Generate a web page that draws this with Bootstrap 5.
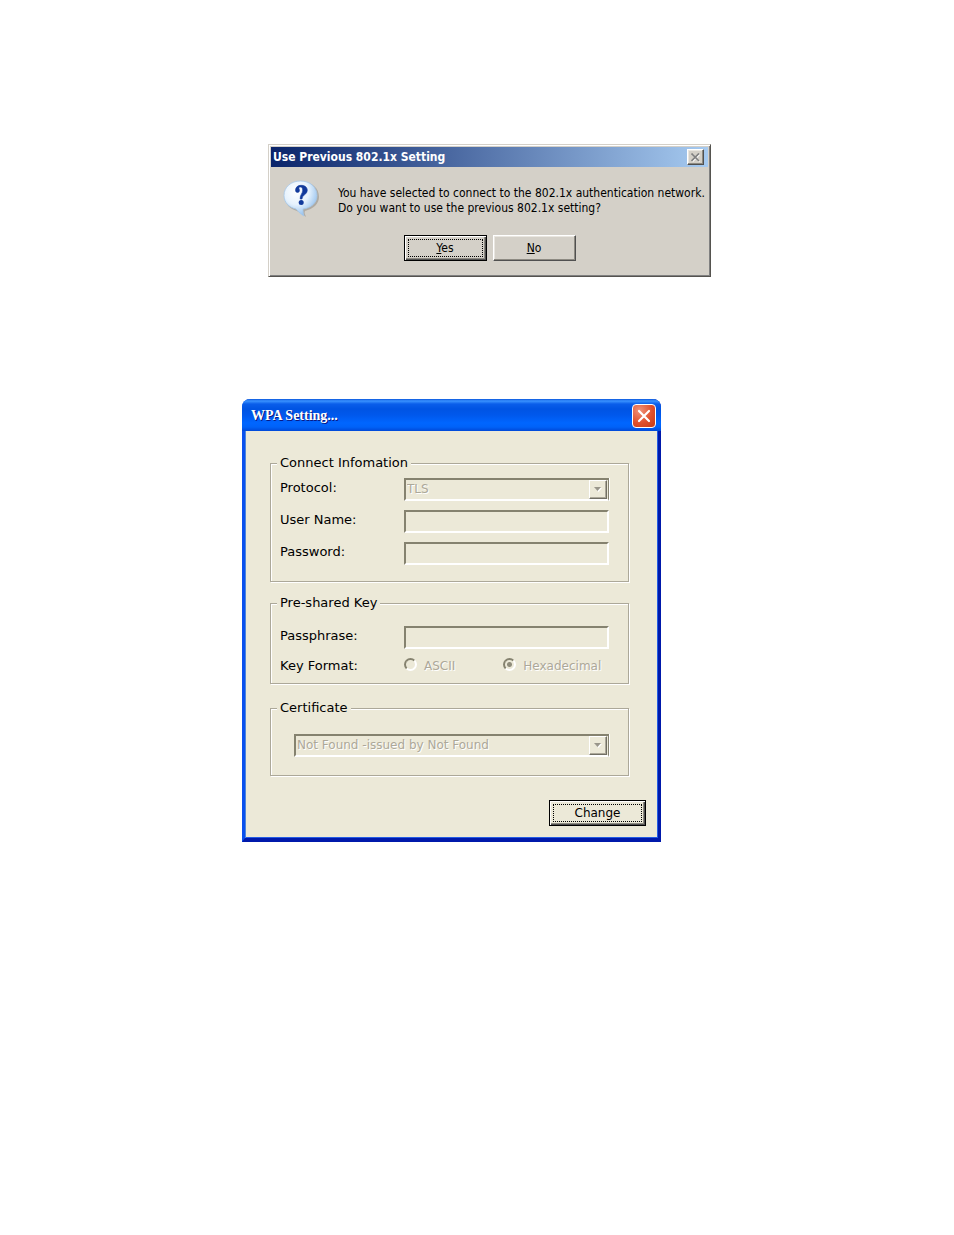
<!DOCTYPE html>
<html lang="en">
<head>
<meta charset="utf-8">
<meta name="viewport" content="width=device-width, initial-scale=1">
<title>Wireless settings dialogs</title>
<link href="https://cdn.jsdelivr.net/npm/bootstrap@5.3.0/dist/css/bootstrap.min.css" rel="stylesheet">
<style>
  body { background: #fff; color: #000; }
  .page { padding-top: 144px; gap: 122px; }
  .slot-prompt { padding-left: 25px; }
  .slot-wpa { padding-right: 51px; }

  /* Classic grey message box */
  .prompt {
    width: 100%; max-width: 443px; padding: 2px 2px 15px;
    background: #d4d0c8; font: 12px/15px "DejaVu Sans Condensed", "DejaVu Sans", sans-serif;
    border: 1px solid; border-color: #d4d0c8 #55534f #55534f #d4d0c8;
    box-shadow: inset 1px 1px #fff, inset -1px -1px #808080;
  }
  .prompt-title {
    height: 20px; padding: 0 4px 0 2px; color: #fff;
    background: linear-gradient(90deg, #0a246a, #a6caf0);
  }
  .prompt-title h1 { font: bold 12px/20px "DejaVu Sans Condensed", "DejaVu Sans", sans-serif; margin: 0; }
  .prompt-close { width: 17px; height: 16px; color: #808080; }
  .prompt-body { padding: 13px 3px 0 12px; gap: 19px; }
  .prompt-text { padding-top: 6px; }
  .prompt-actions { gap: 6px; margin-top: 17px; }
  .prompt-actions .btn { width: 83px; height: 26px; }

  .btn.classic {
    --bs-btn-font-size: inherit; --bs-btn-line-height: 16px; --bs-btn-color: #000;
    --bs-btn-hover-color: #000; --bs-btn-border-radius: 0; font-family: inherit;
    padding: 0; border: 1px solid; border-color: #fff #505050 #505050 #fff; border-radius: 0;
    background: #d4d0c8; box-shadow: inset -1px -1px #8d8a82, inset 1px 1px #e9e6e0;
  }
  .btn.classic.default-btn { border-color: #000; box-shadow: inset 1px 1px #fff, inset -1px -1px #505050, inset -2px -2px #8d8a82; padding: 3px; }
  .focus-dots { border: 1px dotted #000; }

  /* Blue themed settings window */
  .wpa {
    width: 100%; max-width: 419px; background: #ece9d8; border: solid #0831d9;
    border-width: 0 3px 4px; border-color: #0a50ee #0019ab #0019ab #0a50ee;
    border-radius: 8px 8px 0 0; box-shadow: inset 1px 0 #4d86dc, inset -1px 0 #245ce4, inset 0 -1px #245ce4;
    font: 13px/16px "DejaVu Sans", sans-serif;
  }
  .wpa-title {
    height: 32px; margin: 0 -3px; padding: 2px 5px 0 9px; color: #fff; border-radius: 8px 8px 0 0;
    background: linear-gradient(#0a56dc 0, #3a93ff 2px, #0a5eea 5px, #0054e3 10px, #0058ec 16px, #0066ff 24px, #0062f8 28px, #0048d8 32px);
  }
  .wpa-title h2 { margin: 0; font: bold 14px/20px "Liberation Serif", serif; text-shadow: 1px 1px #0a1883; }
  .wpa-close {
    width: 24px; height: 24px; border: 1px solid #fff; border-radius: 4px; color: #fff;
    background: radial-gradient(circle at 30% 25%, #f0937a, #e0502c 55%, #c43a14);
  }
  .wpa-form { padding: 24px 12px 12px 25px; }
  .group {
    margin: 0 17px 0 0; padding: 0 19px 16px 9px; border: 1px solid #aca899;
    box-shadow: 1px 1px #fff, inset 1px 1px #fff;
  }
  .group legend {
    float: none; width: auto; margin: 0 0 7px -3px; padding: 0 3px;
    font: inherit; background: #ece9d8;
  }
  .group-key { margin-top: 13px; padding-bottom: 9px; }
  .group-cert { margin-top: 16px; padding-bottom: 18px; }
  .cert-pick { margin: 11px 0 0 14px; }
  .field-name { width: 124px; flex: none; padding-bottom: 3px; }
  .sunken {
    width: 100%; height: 23px; padding: 0 2px; border: 2px solid; border-radius: 0;
    border-color: #85826f #fff #fff #85826f; background: #ece9d8; appearance: none;
    font: inherit; font-size: 12px; color: #aca899; opacity: 1; text-shadow: 1px 1px #fff; display: block;
  }
  select.sunken { padding: 0 1px 2px; border-width: 2px 1px 2px 2px; border-right-color: #85826f; box-shadow: 1px 0 #fff; }
  .drop {
    right: 2px; top: 2px; bottom: 2px; width: 18px; pointer-events: none;
    border: 1px solid; border-color: #fff #716f64 #716f64 #fff; box-shadow: inset -1px -1px #aca899;
  }
  .fields { gap: 9px; }
  .radio-mark {
    appearance: none; width: 13px; height: 13px; margin: 0; border-radius: 50%;
    border: 2px solid; border-color: #85826f #fff #fff #85826f;
  }
  .radio-mark:checked { background: radial-gradient(circle, #8f8c7b 0 2px, transparent 3px); }
  .off { font-size: 12px; color: #aca899; text-shadow: 1px 1px #fff; }
  .radios { gap: 48px; }
  .radio-item { gap: 7px; }
  .wpa .btn.classic { background: #ece9d8; width: 97px; height: 26px; font-size: 12px; }
</style>
</head>
<body>
<main class="page d-flex flex-column">
  <div class="slot-prompt d-flex justify-content-center">
    <section class="prompt" role="dialog" aria-labelledby="prompt-title">
      <header class="prompt-title d-flex align-items-center justify-content-between">
        <h1 id="prompt-title">Use Previous 802.1x Setting</h1>
        <button type="button" class="btn classic prompt-close d-flex align-items-center justify-content-center" aria-label="Close">
          <svg width="9" height="9" viewBox="0 0 9 9" fill="none"><path d="M1.5 1.5l7 7M8.5 1.5l-7 7" stroke="#fff" stroke-width="1.5"/><path d="M.5.5l7.500 7.500M8 .5L.5 8" stroke="#808080" stroke-width="1.700"/></svg>
        </button>
      </header>
      <div class="prompt-body d-flex">
        <svg class="flex-shrink-0" width="36" height="38" viewBox="0 0 36 38" aria-hidden="true">
          <defs><radialGradient id="bubble" cx=".38" cy=".3" r=".75"><stop offset="0" stop-color="#fff"/><stop offset=".5" stop-color="#e6f2fd"/><stop offset="1" stop-color="#88b9eb"/></radialGradient></defs>
          <path d="M19 2C9 2 2 8 2 17c0 7 5 12 12 14 3 1 5 3 9 6-1-3-2-4-1-6 8-2 14-7 14-14C36 8 29 2 19 2z" fill="#77736b" opacity=".4"/>
          <path d="M17.500 1C8 1 1 7 1 15.500c0 7 5 12 12 13.500 2 2 4 5 8 7-1-3-1-5-1-7 8-1 14-6 14-13.500C34 7 27 1 17.500 1z" fill="url(#bubble)" stroke="#a7c8e8" stroke-width=".8"/>
          <path d="M12.500 10.500c0-3.500 2.500-5.200 5.500-5.200 3.700 0 6.300 1.900 6.300 5 0 4.200-5 4.400-5.300 8.700h-1.800c-.4-4 2.500-5.500 2.500-8.800 0-2-.9-3.200-2.300-3.200-1 0-1.500.5-1.500 1.200 0 .8.600 1.200.6 2.200a2 2 0 0 1-4 .1z" fill="#123a9c" stroke="#123a9c" stroke-width=".6"/>
          <circle cx="18.200" cy="22.500" r="2.500" fill="#123a9c"/>
        </svg>
        <p class="prompt-text text-nowrap mb-0">You have selected to connect to the 802.1x authentication network.<br>Do you want to use the previous 802.1x setting?</p>
      </div>
      <div class="prompt-actions d-flex justify-content-center">
        <button type="button" class="btn classic default-btn d-flex"><span class="focus-dots w-100 h-100"><u>Y</u>es</span></button>
        <button type="button" class="btn classic"><u>N</u>o</button>
      </div>
    </section>
  </div>

  <div class="slot-wpa d-flex justify-content-center">
    <section class="wpa" role="dialog" aria-labelledby="wpa-title">
      <header class="wpa-title d-flex align-items-center justify-content-between">
        <h2 id="wpa-title">WPA Setting...</h2>
        <button type="button" class="wpa-close p-0 d-flex align-items-center justify-content-center" aria-label="Close">
          <svg width="14" height="14" viewBox="0 0 14 14" stroke="#fff" stroke-width="2.200" stroke-linecap="round"><path d="M2 2l10 10M12 2L2 12"/></svg>
        </button>
      </header>
      <form class="wpa-form">
        <fieldset class="group">
          <legend>Connect Infomation</legend>
          <div class="fields d-flex flex-column">
            <div class="d-flex align-items-center">
              <label class="field-name" for="protocol">Protocol:</label>
              <div class="position-relative flex-grow-1">
                <select class="sunken" id="protocol" disabled><option>TLS</option></select>
                <span class="drop position-absolute d-flex align-items-center justify-content-center"><svg width="8" height="5"><path d="M1 1h7L4.500 5z" fill="#fff"/><path d="M0 0h7L3.500 4z" fill="#99968a"/></svg></span>
              </div>
            </div>
            <div class="d-flex align-items-center">
              <label class="field-name" for="user">User Name:</label>
              <input class="sunken" type="text" id="user" disabled>
            </div>
            <div class="d-flex align-items-center">
              <label class="field-name" for="password">Password:</label>
              <input class="sunken" type="password" id="password" disabled>
            </div>
          </div>
        </fieldset>

        <fieldset class="group group-key">
          <legend>Pre-shared Key</legend>
          <div class="fields d-flex flex-column">
            <div class="d-flex align-items-center pt-2">
              <label class="field-name" for="passphrase">Passphrase:</label>
              <input class="sunken" type="text" id="passphrase" disabled>
            </div>
            <div class="d-flex align-items-center" role="radiogroup" aria-labelledby="key-format">
              <span class="field-name pb-0" id="key-format">Key Format:</span>
              <div class="radios d-flex">
                <div class="radio-item d-flex"><input class="radio-mark" type="radio" name="format" id="ascii" disabled><label class="off" for="ascii">ASCII</label></div>
                <div class="radio-item d-flex"><input class="radio-mark" type="radio" name="format" id="hex" checked disabled><label class="off" for="hex">Hexadecimal</label></div>
              </div>
            </div>
          </div>
        </fieldset>

        <fieldset class="group group-cert">
          <legend>Certificate</legend>
          <div class="cert-pick position-relative">
            <select class="sunken" aria-label="Certificate" disabled><option>Not Found -issued by Not Found</option></select>
            <span class="drop position-absolute d-flex align-items-center justify-content-center"><svg width="8" height="5"><path d="M1 1h7L4.500 5z" fill="#fff"/><path d="M0 0h7L3.500 4z" fill="#99968a"/></svg></span>
          </div>
        </fieldset>

        <div class="d-flex justify-content-end mt-4">
          <button type="button" class="btn classic default-btn d-flex"><span class="focus-dots w-100 h-100">Change</span></button>
        </div>
      </form>
    </section>
  </div>
</main>
<script src="https://cdn.jsdelivr.net/npm/bootstrap@5.3.0/dist/js/bootstrap.bundle.min.js"></script>
</body>
</html>
